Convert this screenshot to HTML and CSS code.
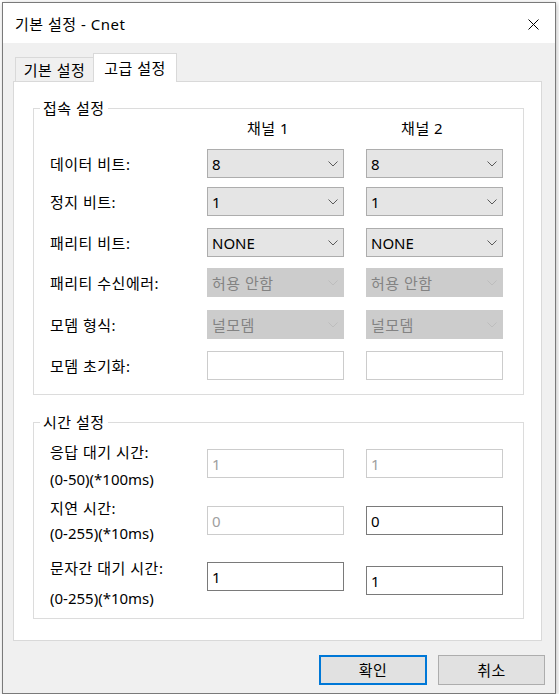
FILE: index.html
```html
<!DOCTYPE html>
<html lang="ko">
<head>
<meta charset="utf-8">
<title>기본 설정 - Cnet</title>
<link rel="stylesheet" href="styles.css">
</head>
<body>
<div class="window">
  <div class="titlebar">
    <span class="title">기본 설정 - Cnet</span>
    <svg class="close" width="11" height="11" viewBox="0 0 11 11"><path d="M0.5 0.5 L10.5 10.5 M10.5 0.5 L0.5 10.5" stroke="#000" stroke-width="1" fill="none"/></svg>
  </div>
  <div class="client">
    <div class="tabs">
      <div class="tab">기본 설정</div>
      <div class="tab active">고급 설정</div>
    </div>
    <div class="panel">
      <div class="group g1">
        <div class="legend">접속 설정</div>
        <div class="head">
          <span class="h1">채널 1</span>
          <span class="h2">채널 2</span>
        </div>
        <div class="row r1">
          <span class="lbl">데이터 비트:</span>
          <div class="combo"><span>8</span><svg class="chev" width="10" height="6" viewBox="0 0 10 6"><path d="M0.5 0.5 L5 5 L9.5 0.5" stroke="#5a5a5a" fill="none"/></svg></div>
          <div class="combo c2"><span>8</span><svg class="chev" width="10" height="6" viewBox="0 0 10 6"><path d="M0.5 0.5 L5 5 L9.5 0.5" stroke="#5a5a5a" fill="none"/></svg></div>
        </div>
        <div class="row r2">
          <span class="lbl">정지 비트:</span>
          <div class="combo"><span>1</span><svg class="chev" width="10" height="6" viewBox="0 0 10 6"><path d="M0.5 0.5 L5 5 L9.5 0.5" stroke="#5a5a5a" fill="none"/></svg></div>
          <div class="combo c2"><span>1</span><svg class="chev" width="10" height="6" viewBox="0 0 10 6"><path d="M0.5 0.5 L5 5 L9.5 0.5" stroke="#5a5a5a" fill="none"/></svg></div>
        </div>
        <div class="row r3">
          <span class="lbl">패리티 비트:</span>
          <div class="combo latin"><span>NONE</span><svg class="chev" width="10" height="6" viewBox="0 0 10 6"><path d="M0.5 0.5 L5 5 L9.5 0.5" stroke="#5a5a5a" fill="none"/></svg></div>
          <div class="combo latin c2"><span>NONE</span><svg class="chev" width="10" height="6" viewBox="0 0 10 6"><path d="M0.5 0.5 L5 5 L9.5 0.5" stroke="#5a5a5a" fill="none"/></svg></div>
        </div>
        <div class="row r4">
          <span class="lbl">패리티 수신에러:</span>
          <div class="combo dis"><span>허용 안함</span><svg class="chev" width="10" height="6" viewBox="0 0 10 6"><path d="M0.5 0.5 L5 5 L9.5 0.5" stroke="#bdbdbd" fill="none"/></svg></div>
          <div class="combo dis c2"><span>허용 안함</span><svg class="chev" width="10" height="6" viewBox="0 0 10 6"><path d="M0.5 0.5 L5 5 L9.5 0.5" stroke="#bdbdbd" fill="none"/></svg></div>
        </div>
        <div class="row r5">
          <span class="lbl">모뎀 형식:</span>
          <div class="combo dis"><span>널모뎀</span><svg class="chev" width="10" height="6" viewBox="0 0 10 6"><path d="M0.5 0.5 L5 5 L9.5 0.5" stroke="#bdbdbd" fill="none"/></svg></div>
          <div class="combo dis c2"><span>널모뎀</span><svg class="chev" width="10" height="6" viewBox="0 0 10 6"><path d="M0.5 0.5 L5 5 L9.5 0.5" stroke="#bdbdbd" fill="none"/></svg></div>
        </div>
        <div class="row r6">
          <span class="lbl">모뎀 초기화:</span>
          <div class="edit dis"></div>
          <div class="edit dis c2"></div>
        </div>
      </div>

      <div class="group g2">
        <div class="legend">시간 설정</div>
        <div class="trow t1">
          <div class="tlbl"><div class="l1">응답 대기 시간:</div><div class="l2">(0-50)(*100ms)</div></div>
          <div class="edit dis e1">1</div>
          <div class="edit dis c2 e2">1</div>
        </div>
        <div class="trow t2">
          <div class="tlbl"><div class="l1">지연 시간:</div><div class="l2">(0-255)(*10ms)</div></div>
          <div class="edit dis e1">0</div>
          <div class="edit c2 e2">0</div>
        </div>
        <div class="trow t3">
          <div class="tlbl"><div class="l1">문자간 대기 시간:</div><div class="l2">(0-255)(*10ms)</div></div>
          <div class="edit e1">1</div>
          <div class="edit c2 e2">1</div>
        </div>
      </div>
    </div>
    <div class="buttons">
      <div class="btn default">확인</div>
      <div class="btn cancel">취소</div>
    </div>
  </div>
</div>
</body>
</html>
```

FILE: styles.css
```css
html {
  background: #ffffff;
}
body {
  margin: 0;
  font-family: "Noto Sans", "Noto Sans CJK KR", sans-serif;
  font-size: 15px;
  letter-spacing: 0.5px;
  color: #000;
}
.window {
  margin: 2px 0 0 2px;
  width: 554px;
  height: 692px;
  box-sizing: border-box;
  border: 1px solid #7a7a7a;
  box-shadow: 1px 1px 5px rgba(0,0,0,0.25);
  background: #f0f0f0;
  display: flex;
  flex-direction: column;
}
.titlebar {
  height: 40px;
  background: #fff;
  display: flex;
  align-items: center;
  justify-content: space-between;
  padding: 2px 16px 0 12px;
  box-sizing: border-box;
}
.title {
  line-height: 20px;
}
.close {
  display: block;
}
.client {
  flex: 1;
  background: #f0f0f0;
}
.tabs {
  display: flex;
  align-items: flex-end;
  margin: 10px 0 0 12px;
}
.tab {
  height: 24px;
  width: 79px;
  box-sizing: border-box;
  border: 1px solid #d9d9d9;
  border-bottom: none;
  background: #f0f0f0;
  display: flex;
  align-items: center;
  justify-content: center;
  line-height: 20px;
  color: #000;
  padding-top: 1px;
}
.tab.active {
  height: 29px;
  width: 84px;
  margin-left: -1px;
  margin-bottom: -1px;
  background: #fff;
  position: relative;
  z-index: 1;
  padding: 0 0 1px 0;
}
.panel {
  margin-left: 10px;
  width: 529px;
  box-sizing: border-box;
  border: 1px solid #d9d9d9;
  background: #fff;
  padding: 26px 0 21px 19px;
}
.group {
  width: 491px;
  box-sizing: border-box;
  border: 1px solid #dcdcdc;
  padding-left: 16px;
}
.g1 {
  padding-bottom: 14px;
}
.g2 {
  margin-top: 27px;
  padding-bottom: 10px;
}
.legend {
  width: fit-content;
  margin: -11px 0 0 -10px;
  padding: 0 3px;
  background: #fff;
  line-height: 20px;
}
.head {
  display: flex;
  line-height: 20px;
}
.h1 {
  margin-left: 197px;
}
.h2 {
  margin-left: 112px;
}
.row {
  display: flex;
  align-items: center;
}
.r1 { margin-top: 11px; }
.r2 { margin-top: 9px; }
.r3 { margin-top: 12px; }
.r4 { margin-top: 11px; }
.r5 { margin-top: 13px; }
.r6 { margin-top: 12px; }
.lbl {
  width: 157px;
  line-height: 20px;
}
.combo {
  width: 137px;
  height: 29px;
  box-sizing: border-box;
  border: 1px solid #adadad;
  background: #e5e5e5;
  display: flex;
  align-items: center;
  justify-content: space-between;
  padding: 0 5px 0 4px;
  line-height: 20px;
}
.combo.latin {
  letter-spacing: 0;
}
.c2 {
  margin-left: 22px;
}
.combo.dis {
  background: #cccccc;
  border-color: #cccccc;
  color: #838383;
}
.chev {
  display: block;
}
.edit {
  width: 137px;
  height: 29px;
  box-sizing: border-box;
  border: 1px solid #7a7a7a;
  background: #fff;
  padding-left: 4px;
  display: flex;
  align-items: center;
  line-height: 20px;
}
.edit.dis {
  border-color: #cccccc;
  color: #a0a0a0;
}
.trow {
  display: flex;
  align-items: flex-start;
}
.tlbl {
  width: 157px;
}
.l1, .l2 {
  line-height: 20px;
}
.l2 {
  letter-spacing: 0;
}
.t1 { margin-top: 10px; }
.t1 .l2 { margin-top: 7px; }
.t1 .e1, .t1 .e2 { margin-top: 7px; }
.t2 { margin-top: 9px; }
.t2 .l2 { margin-top: 5px; }
.t2 .e1, .t2 .e2 { margin-top: 8px; }
.t3 { margin-top: 15px; }
.t3 .l2 { margin-top: 10px; }
.t3 .e1 { margin-top: 4px; }
.t3 .e2 { margin-top: 8px; }
.buttons {
  display: flex;
  justify-content: flex-end;
  gap: 11px;
  margin: 14px 10px 0 0;
}
.btn {
  height: 30px;
  box-sizing: border-box;
  background: #e1e1e1;
  border: 1px solid #adadad;
  display: flex;
  align-items: center;
  justify-content: center;
  line-height: 20px;
}
.btn.default {
  width: 108px;
  border: 2px solid #0078d7;
}
.btn.cancel {
  width: 107px;
}
```
